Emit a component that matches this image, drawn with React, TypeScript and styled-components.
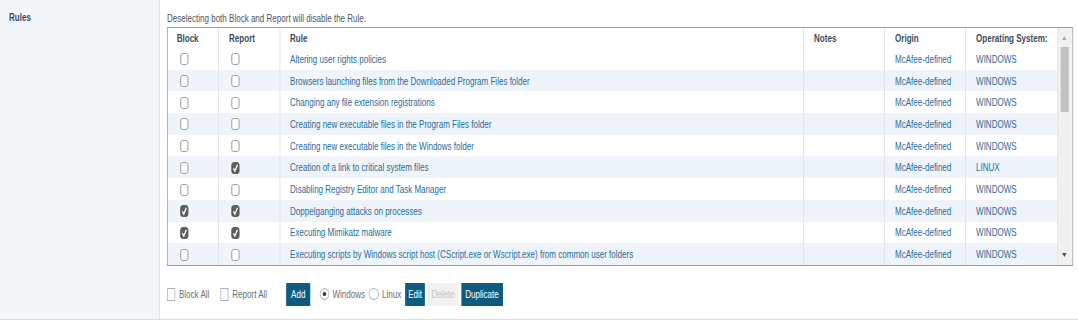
import React from "react";
import styled, { createGlobalStyle } from "styled-components";

/* The reference is a horizontally condensed rendering; the page is laid out
   in "design" pixels and the whole frame is condensed by S along x.
   u(n) converts a horizontal length measured on the reference into design px. */
const S = 0.73;
const u = (n: number) => `${(n / S).toFixed(3)}px`;

const Global = createGlobalStyle`
  html, body { margin: 0; padding: 0; background: #ffffff; overflow: hidden; }
  body {
    font-family: "Liberation Sans", Arial, sans-serif;
    font-size: 11px;
    color: #4f555c;
  }
`;

const Condensed = styled.div`
  width: ${u(1078)};
  transform: scaleX(${S});
  transform-origin: 0 0;
`;

const Page = styled.div`
  display: flex;
  height: 320px;
  box-sizing: border-box;
  border-bottom: 1px solid #d5dde6;
`;

const LabelCell = styled.div`
  width: ${u(160)};
  flex: none;
  box-sizing: border-box;
  background: #f3f6f9;
  border-right: ${u(1)} solid #d5dde6;
  padding: 10px ${u(9)};
  line-height: 14px;
  font-weight: bold;
  color: #3b4b5d;
`;

const Content = styled.div`
  flex: 1;
  padding: 11px 0 0 ${u(7)};
  display: flex;
  flex-direction: column;
`;

const Hint = styled.div`
  line-height: 14px;
  height: 14px;
  margin-bottom: 2px;
  color: #4f555c;
`;

const Frame = styled.div`
  display: flex;
  width: ${u(906)};
  box-sizing: border-box;
  border: 1px solid #8e9cad;
  border-left-width: ${u(1)};
  border-right-width: ${u(1)};
`;

const Table = styled.table`
  border-collapse: collapse;
  table-layout: fixed;
  width: ${u(889)};
`;

const Col = styled.col<{ $w: number }>`
  width: ${(p) => u(p.$w)};
`;

const Th = styled.th`
  box-sizing: border-box;
  height: 20px;
  padding: 0 0 0 ${u(10)};
  text-align: left;
  font-weight: bold;
  color: #3b4b5d;
  background: #ffffff;
  border-left: ${u(1)} solid #d8dde3;
  white-space: nowrap;
  overflow: hidden;
  &:first-child { border-left: none; padding-left: ${u(9)}; }
`;

const Tr = styled.tr<{ $alt: boolean }>`
  background: ${(p) => (p.$alt ? "#eef4f9" : "#ffffff")};
`;

const Td = styled.td<{ $box?: boolean }>`
  box-sizing: border-box;
  height: 21.7px;
  padding: 0 0 0 ${(p) => (p.$box ? u(12.5) : u(10))};
  text-align: left;
  border-left: ${u(1)} solid #d8dde3;
  white-space: nowrap;
  overflow: hidden;
  &:first-child { border-left: none; }
`;

const Link = styled.span`
  color: #2a6c9b;
`;

const Box = styled.span<{ $checked?: boolean }>`
  display: inline-block;
  vertical-align: middle;
  width: ${u(8)};
  height: 12px;
  box-sizing: border-box;
  border-radius: 3px;
  border: 1px solid ${(p) => (p.$checked ? "#555555" : "#8f8f8f")};
  border-left-width: ${u(1)};
  border-right-width: ${u(1)};
  background: ${(p) => (p.$checked ? "#5e5e5e" : "#ffffff")};
  svg { display: block; width: 100%; height: 100%; }
`;

const Scrollbar = styled.div`
  width: ${u(15)};
  flex: none;
  box-sizing: border-box;
  background: #f0f0f0;
  border-left: ${u(1)} solid #e2e2e2;
  display: flex;
  flex-direction: column;
  align-items: center;
`;

const Arrow = styled.div<{ $down?: boolean }>`
  width: 0;
  height: 0;
  border-left: ${u(2.5)} solid transparent;
  border-right: ${u(2.5)} solid transparent;
  ${(p) =>
    p.$down
      ? "border-top: 4px solid #505050; margin-top: auto; margin-bottom: 8px;"
      : "border-bottom: 4px solid #a8a8a8; margin-top: 8px;"}
`;

const Thumb = styled.div`
  width: ${u(8)};
  height: 65px;
  margin-top: 7px;
  background: #c1c1c1;
`;

const Toolbar = styled.div`
  display: flex;
  align-items: center;
  height: 23px;
  margin-top: 17px;
`;

const AllLabel = styled.label`
  display: flex;
  align-items: center;
  gap: ${u(4)};
  margin-right: ${u(11)};
  color: #6b7077;
`;

const SmallBox = styled.span`
  display: inline-block;
  width: ${u(8)};
  height: 13px;
  box-sizing: border-box;
  border: 1px solid #a9b0b7;
  border-left-width: ${u(1)};
  border-right-width: ${u(1)};
  background: #fff;
`;

const Button = styled.button<{ $disabled?: boolean; $gap?: number; $pad?: number }>`
  height: 23px;
  padding: 0 ${(p) => u(p.$pad ?? 4)};
  margin: 0 ${(p) => u(p.$gap ?? 2)} 0 0;
  border: none;
  border-radius: 0;
  font-family: inherit;
  font-size: 11px;
  background: ${(p) => (p.$disabled ? "#f1f1f1" : "#0e5b80")};
  color: ${(p) => (p.$disabled ? "#c3c6c9" : "#ffffff")};
`;

const AddButton = styled(Button)`
  margin-left: ${u(8)};
`;

const RadioLabel = styled.label`
  display: flex;
  align-items: center;
  gap: ${u(3)};
  margin-right: ${u(4)};
  color: #6b7077;
`;

const Radio = styled.span<{ $on?: boolean }>`
  display: flex;
  align-items: center;
  justify-content: center;
  width: ${u(10)};
  height: 12px;
  box-sizing: border-box;
  border-radius: 50%;
  border: 1px solid #a9b0b7;
  border-left-width: ${u(1)};
  border-right-width: ${u(1)};
  background: #fff;
  &::after {
    content: "";
    display: ${(p) => (p.$on ? "block" : "none")};
    width: ${u(3.5)};
    height: 4px;
    border-radius: 50%;
    background: #3a3a3a;
  }
`;

const CheckBox = ({ checked }: { checked?: boolean }) => (
  <Box $checked={checked}>
    {checked ? (
      <svg viewBox="0 0 10 10" preserveAspectRatio="none">
        <path d="M2 5.4 L4.2 8 L8.2 1.8" fill="none" stroke="#ffffff" strokeWidth="1.8" />
      </svg>
    ) : null}
  </Box>
);

type Rule = { name: string; block: boolean; report: boolean; os: string };

const rules: Rule[] = [
  { name: "Altering user rights policies", block: false, report: false, os: "WINDOWS" },
  { name: "Browsers launching files from the Downloaded Program Files folder", block: false, report: false, os: "WINDOWS" },
  { name: "Changing any file extension registrations", block: false, report: false, os: "WINDOWS" },
  { name: "Creating new executable files in the Program Files folder", block: false, report: false, os: "WINDOWS" },
  { name: "Creating new executable files in the Windows folder", block: false, report: false, os: "WINDOWS" },
  { name: "Creation of a link to critical system files", block: false, report: true, os: "LINUX" },
  { name: "Disabling Registry Editor and Task Manager", block: false, report: false, os: "WINDOWS" },
  { name: "Doppelganging attacks on processes", block: true, report: true, os: "WINDOWS" },
  { name: "Executing Mimikatz malware", block: true, report: true, os: "WINDOWS" },
  { name: "Executing scripts by Windows script host (CScript.exe or Wscript.exe) from common user folders", block: false, report: false, os: "WINDOWS" },
];

const columns = [
  { label: "Block", w: 51 },
  { label: "Report", w: 61 },
  { label: "Rule", w: 524 },
  { label: "Notes", w: 81 },
  { label: "Origin", w: 81 },
  { label: "Operating System:", w: 91 },
];

export default function App() {
  return (
    <>
      <Global />
      <Condensed>
        <Page>
          <LabelCell>Rules</LabelCell>
          <Content>
            <Hint>Deselecting both Block and Report will disable the Rule.</Hint>
            <Frame>
              <Table>
                <colgroup>
                  {columns.map((c) => (
                    <Col key={c.label} $w={c.w} />
                  ))}
                </colgroup>
                <thead>
                  <tr>
                    {columns.map((c) => (
                      <Th key={c.label}>{c.label}</Th>
                    ))}
                  </tr>
                </thead>
                <tbody>
                  {rules.map((r, i) => (
                    <Tr key={r.name} $alt={i % 2 === 1}>
                      <Td $box>
                        <CheckBox checked={r.block} />
                      </Td>
                      <Td $box>
                        <CheckBox checked={r.report} />
                      </Td>
                      <Td>
                        <Link>{r.name}</Link>
                      </Td>
                      <Td />
                      <Td>
                        <Link>McAfee-defined</Link>
                      </Td>
                      <Td>
                        <Link>{r.os}</Link>
                      </Td>
                    </Tr>
                  ))}
                </tbody>
              </Table>
              <Scrollbar>
                <Arrow />
                <Thumb />
                <Arrow $down />
              </Scrollbar>
            </Frame>
            <Toolbar>
              <AllLabel>
                <SmallBox />
                Block All
              </AllLabel>
              <AllLabel>
                <SmallBox />
                Report All
              </AllLabel>
              <AddButton $gap={9} $pad={5}>Add</AddButton>
              <RadioLabel>
                <Radio $on />
                Windows
              </RadioLabel>
              <RadioLabel>
                <Radio />
                Linux
              </RadioLabel>
              <Button $pad={3}>Edit</Button>
              <Button $disabled $pad={4.5}>Delete</Button>
              <Button>Duplicate</Button>
            </Toolbar>
          </Content>
        </Page>
      </Condensed>
    </>
  );
}
